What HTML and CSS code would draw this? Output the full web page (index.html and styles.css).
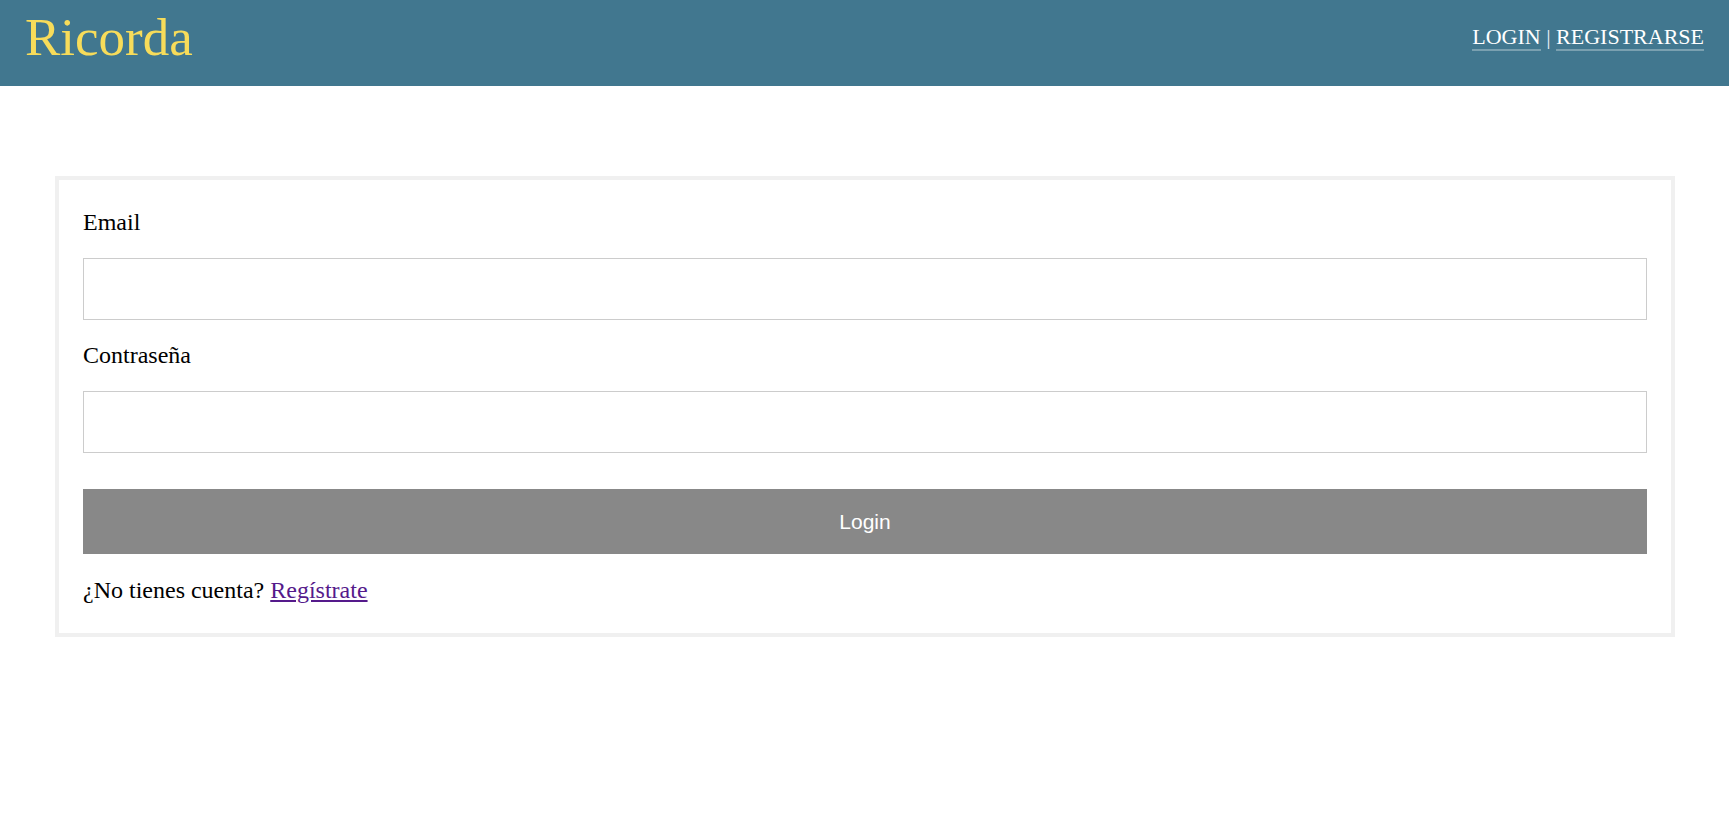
FILE: index.html
```html
<!DOCTYPE html>
<html lang="es">
<head>
<meta charset="utf-8">
<title>Ricorda - Login</title>
<link rel="stylesheet" href="styles.css">
</head>
<body>
<header class="topbar">
  <a class="logo" href="#">Ricorda</a>
  <nav class="nav">
    <a class="nav-link" href="#">LOGIN</a> <span class="sep">|</span> <a class="nav-link" href="#">REGISTRARSE</a>
  </nav>
</header>
<main class="card">
  <form class="form">
    <label class="label" for="email">Email</label>
    <input class="input" id="email" type="email">
    <label class="label" for="pass">Contraseña</label>
    <input class="input input-last" id="pass" type="password">
    <button class="btn" type="button">Login</button>
    <p class="footer-text">¿No tienes cuenta? <a class="link" href="#">Regístrate</a></p>
  </form>
</main>
</body>
</html>
```
FILE: styles.css
```css
html, body {
  margin: 0;
  padding: 0;
  background: #ffffff;
  font-family: "Liberation Serif", "Times New Roman", serif;
  color: #000;
}

.topbar {
  height: 86px;
  box-sizing: border-box;
  background: #41778f;
  display: flex;
  align-items: center;
  justify-content: space-between;
  padding: 0 25px 12px 25px;
}

.logo {
  font-family: "Liberation Serif", "Times New Roman", serif;
  font-size: 53px;
  color: #f7dc5a;
  text-decoration: none;
  line-height: 60px;
}

.nav {
  font-size: 22px;
  color: #ffffff;
  line-height: 26px;
}

.nav-link {
  color: #ffffff;
  text-decoration: none;
  border-bottom: 2px solid rgba(255, 255, 255, 0.3);
}

.sep {
  color: #e8eef2;
}

.card {
  display: block;
  margin: 90px 54px 0 55px;
  border: 4px solid #f0f0f0;
  padding: 28px 24px 29px 24px;
}

.form {
  display: flex;
  flex-direction: column;
}

.label {
  font-size: 24px;
  line-height: 28px;
  margin-bottom: 22px;
}

.input {
  height: 62px;
  box-sizing: border-box;
  border: 1px solid #cccccc;
  border-radius: 0;
  margin: 0 0 21px 0;
  padding: 0 10px;
  font-size: 20px;
  background: #fff;
}

.input-last {
  margin-bottom: 36px;
}

.btn {
  height: 65px;
  border: none;
  background: #888888;
  color: #ffffff;
  font-family: "Liberation Sans", Arial, sans-serif;
  font-size: 21px;
  margin: 0 0 22px 0;
  padding: 0;
  border-radius: 0;
}

.footer-text {
  margin: 0;
  font-size: 24px;
  line-height: 28px;
}

.link {
  color: #551a8b;
}
```
